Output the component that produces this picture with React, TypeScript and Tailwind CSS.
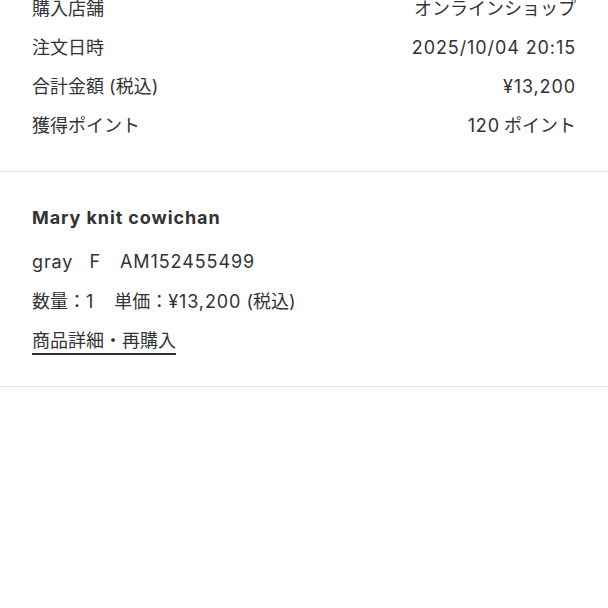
import React from "react";

const font = { fontFamily: 'Inter, "Noto Sans CJK JP", sans-serif' };

const L = ({ children }: { children: React.ReactNode }) => (
  <span className="tracking-[0.05em]">{children}</span>
);

const rows: [React.ReactNode, React.ReactNode, string][] = [
  ["購入店舗", "オンラインショップ", "a"],
  ["注文日時", <L>2025/10/04 20:15</L>, "b"],
  [<>合計金額 (税込)</>, <L>¥13,200</L>, "c"],
  ["獲得ポイント", <><span className="tracking-[0.05em] mr-[4px]">120</span>ポイント</>, "d"],
];

export default function App() {
  return (
    <div className="w-[608px] h-[608px] overflow-hidden bg-white text-[#333333]" style={font}>
      <div className="-mt-[11px]">
        <div className="px-8 pb-[26px] border-b border-[#e5e5e5]">
          {rows.map(([l, r, k]) => (
            <div key={k} className="flex justify-between items-center h-[39px] text-[18px]">
              <span>{l}</span>
              <span>{r}</span>
            </div>
          ))}
        </div>
        <div className="px-8 pt-[33px] pb-[31px] border-b border-[#e5e5e5]">
          <div className="text-[18px] font-bold leading-[26px] tracking-[0.05em]">Mary knit cowichan</div>
          <div className="mt-[18px] text-[18px] leading-[26px]">
            <L>gray</L>
            <span className="inline-block w-[16px]" />F<span className="inline-block w-[20px]" />
            <L>AM152455499</L>
          </div>
          <div className="mt-[14px] text-[18px] leading-[26px]">
            数量：<L>1</L>
            <span className="inline-block w-[20px]" />
            単価：<L>¥13,200</L> (税込)
          </div>
          <div className="mt-[13px] text-[18px] leading-[26px]">
            <span className="inline-block border-b-2 border-[#333333] leading-[24px]">商品詳細・再購入</span>
          </div>
        </div>
      </div>
    </div>
  );
}
